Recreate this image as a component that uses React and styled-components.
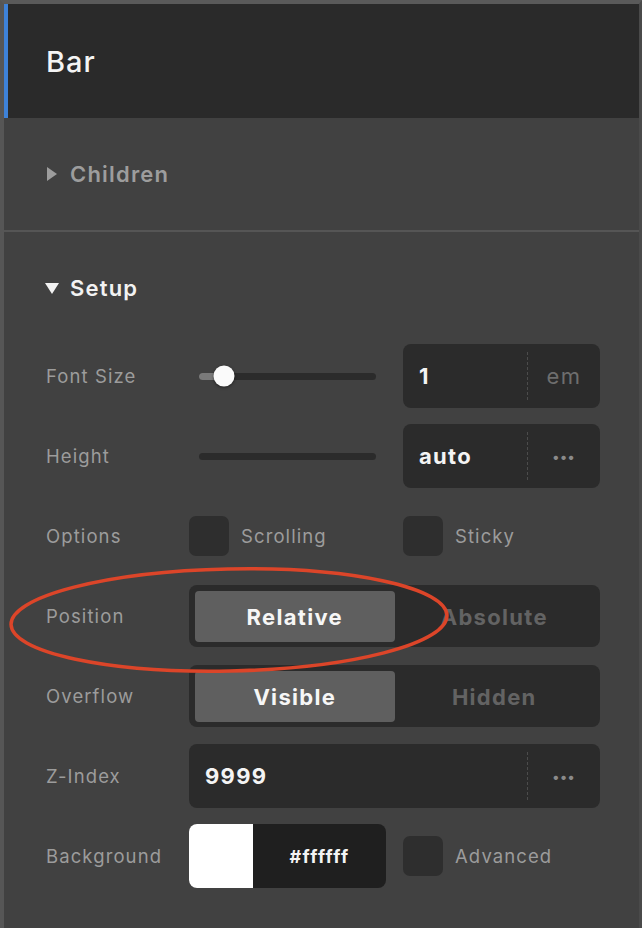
import styled, { createGlobalStyle } from 'styled-components';

const GlobalStyle = createGlobalStyle`
  html, body {
    margin: 0;
    padding: 0;
    background: #404040;
  }
  body {
    font-family: "Inter", "Liberation Sans", sans-serif;
    -webkit-font-smoothing: antialiased;
  }
`;

const Panel = styled.div`
  position: relative;
  width: 642px;
  height: 928px;
  box-sizing: border-box;
  background: #414141;
  border-top: 4px solid #5a5a5a;
  border-left: 4px solid #565656;
  border-right: 3px solid #4a4a4a;
  overflow: hidden;
`;

const Header = styled.div`
  height: 114px;
  display: flex;
  align-items: center;
  box-sizing: border-box;
  padding-left: 38px;
  background: #2a2a2a;
  border-left: 4px solid #3e82d8;
  color: #f4f4f4;
  font-size: 29px;
  font-weight: 500;
  letter-spacing: 1px;
`;

const SectionHead = styled.div`
  display: flex;
  align-items: center;
  gap: ${(p) => (p.$open ? 11 : 13)}px;
  height: ${(p) => p.$height}px;
  padding-left: 41px;
  box-sizing: border-box;
  color: ${(p) => (p.$open ? '#f2f2f2' : '#9d9d9d')};
  font-size: 22px;
  font-weight: 600;
  letter-spacing: 1.2px;
`;

const Collapsed = styled.div`
  border-bottom: 2px solid #555;
`;

const Arrow = styled.span`
  display: inline-block;
  width: 0;
  height: 0;
  ${(p) =>
    p.$open
      ? `border-left: 7px solid transparent;
         border-right: 7px solid transparent;
         border-top: 11px solid #f2f2f2;`
      : `border-top: 7px solid transparent;
         border-bottom: 7px solid transparent;
         border-left: 10px solid #9d9d9d;
         margin-left: 2px;`}
`;

const Setup = styled.div`
  padding-top: 32px;
`;

const Rows = styled.div`
  display: flex;
  flex-direction: column;
  gap: 16px;
  margin-top: 32px;
  padding: 0 39px 0 42px;
`;

const Row = styled.div`
  display: grid;
  grid-template-columns: 143px 214px 1fr;
  align-items: center;
  height: 64px;
`;

const Label = styled.div`
  color: #9c9c9c;
  font-size: 18.5px;
  letter-spacing: 1.1px;
`;

const Slider = styled.div`
  position: relative;
  margin-left: 10px;
  width: 177px;
  height: 7px;
  border-radius: 4px;
  background: #2b2b2b;
`;

const SliderFill = styled.div`
  height: 100%;
  border-radius: 4px 0 0 4px;
  background: #7a7a7a;
`;

const Thumb = styled.div`
  position: absolute;
  top: 50%;
  width: 21px;
  height: 21px;
  border-radius: 50%;
  background: #fafafa;
  box-shadow: 0 1px 3px rgba(0, 0, 0, 0.5);
  transform: translate(-50%, -50%);
`;

const Field = styled.div`
  display: flex;
  align-items: stretch;
  height: 64px;
  border-radius: 8px;
  background: #2b2b2b;
  grid-column: ${(p) => (p.$wide ? '2 / 4' : 'auto')};
`;

const FieldValue = styled.div`
  flex: 1;
  display: flex;
  align-items: center;
  padding-left: 16px;
  color: #f4f4f4;
  font-size: 22px;
  font-weight: 700;
  letter-spacing: 1.3px;
`;

const FieldUnit = styled.div`
  width: 72px;
  display: flex;
  align-items: center;
  justify-content: center;
  margin: 8px 0;
  border-left: 1px dashed #4c4c4c;
  color: #6e6e6e;
  font-size: 22px;
  letter-spacing: 1.5px;
`;

const Dots = styled.span`
  color: #8a8a8a;
  font-size: 14px;
  letter-spacing: 1px;
  font-weight: 700;
`;

const Check = styled.label`
  display: flex;
  align-items: center;
  gap: 12px;
  color: #9c9c9c;
  font-size: 18.5px;
  letter-spacing: 1.1px;
`;

const Box = styled.span`
  width: 40px;
  height: 40px;
  border-radius: 7px;
  background: #2e2e2e;
`;

const Segmented = styled.div`
  grid-column: 2 / 4;
  display: grid;
  grid-template-columns: 1fr 1fr;
  height: 62px;
  box-sizing: border-box;
  padding: 6px 6px 5px;
  border-radius: 8px;
  background: #2b2b2b;
`;

const Segment = styled.div`
  display: flex;
  align-items: center;
  justify-content: center;
  border-radius: 4px;
  background: ${(p) => (p.$active ? '#5f5f5f' : 'transparent')};
  color: ${(p) => (p.$active ? '#f6f6f6' : '#636363')};
  font-size: 22px;
  font-weight: 700;
  letter-spacing: 1.3px;
`;

const Swatch = styled.div`
  display: flex;
  width: 197px;
  height: 64px;
  border-radius: 8px;
  overflow: hidden;
  background: #1f1f1f;
`;

const SwatchColor = styled.div`
  width: 64px;
  background: ${(p) => p.$color};
`;

const SwatchHex = styled.div`
  flex: 1;
  display: flex;
  align-items: center;
  justify-content: center;
  color: #f4f4f4;
  font-size: 18px;
  font-weight: 700;
  letter-spacing: 1.3px;
`;

const Annotation = styled.svg`
  position: absolute;
  left: -4px;
  top: 558px;
  pointer-events: none;
`;

function Toggle({ options, value }) {
  return (
    <Segmented>
      {options.map((o) => (
        <Segment key={o} $active={o === value}>{o}</Segment>
      ))}
    </Segmented>
  );
}

export default function App() {
  const fontSize = 0.14;
  return (
    <>
      <GlobalStyle />
      <Panel>
        <Header>Bar</Header>
        <Collapsed>
          <SectionHead $height={112}>
            <Arrow />
            Children
          </SectionHead>
        </Collapsed>
        <Setup>
          <SectionHead $open $height={48}>
            <Arrow $open />
            Setup
          </SectionHead>
          <Rows>
            <Row>
              <Label>Font Size</Label>
              <Slider>
                <SliderFill style={{ width: `${fontSize * 100}%` }} />
                <Thumb style={{ left: `${fontSize * 100}%` }} />
              </Slider>
              <Field>
                <FieldValue>1</FieldValue>
                <FieldUnit>em</FieldUnit>
              </Field>
            </Row>
            <Row>
              <Label>Height</Label>
              <Slider />
              <Field>
                <FieldValue>auto</FieldValue>
                <FieldUnit><Dots>•••</Dots></FieldUnit>
              </Field>
            </Row>
            <Row>
              <Label>Options</Label>
              <Check><Box />Scrolling</Check>
              <Check><Box />Sticky</Check>
            </Row>
            <Row>
              <Label>Position</Label>
              <Toggle options={['Relative', 'Absolute']} value="Relative" />
            </Row>
            <Row>
              <Label>Overflow</Label>
              <Toggle options={['Visible', 'Hidden']} value="Visible" />
            </Row>
            <Row>
              <Label>Z-Index</Label>
              <Field $wide>
                <FieldValue>9999</FieldValue>
                <FieldUnit><Dots>•••</Dots></FieldUnit>
              </Field>
            </Row>
            <Row>
              <Label>Background</Label>
              <Swatch>
                <SwatchColor $color="#ffffff" />
                <SwatchHex>#ffffff</SwatchHex>
              </Swatch>
              <Check><Box />Advanced</Check>
            </Row>
          </Rows>
        </Setup>
        <Annotation width="460" height="120" viewBox="0 0 460 120">
          <ellipse
            cx="229"
            cy="58"
            rx="218"
            ry="51"
            transform="rotate(-1.2 229 58)"
            fill="none"
            stroke="#dc4529"
            strokeWidth="3.5"
          />
        </Annotation>
      </Panel>
    </>
  );
}
